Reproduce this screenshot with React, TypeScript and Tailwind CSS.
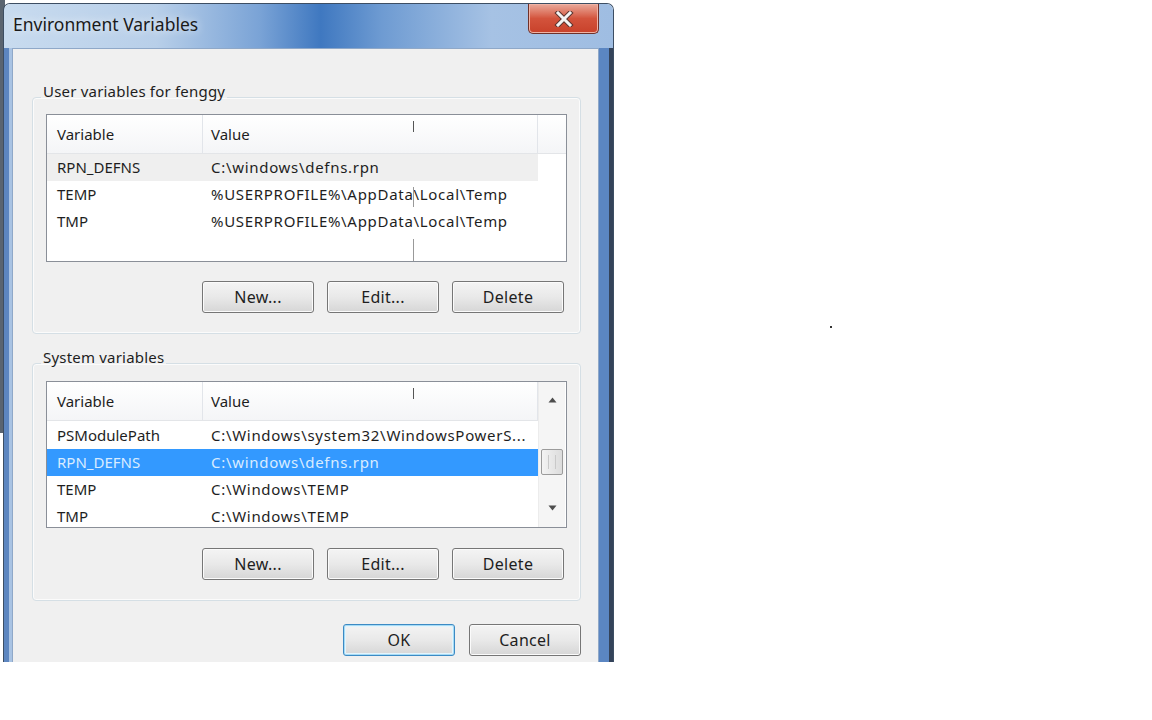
import { ReactNode } from "react";

// Win7-style "Environment Variables" dialog.
const FONT = "font-['Noto_Sans','Open_Sans',sans-serif]";

type Row = { name: string; value: string; selected?: boolean; hover?: boolean };

const USER_ROWS: Row[] = [
  { name: "RPN_DEFNS", value: "C:\\windows\\defns.rpn", hover: true },
  { name: "TEMP", value: "%USERPROFILE%\\AppData\\Local\\Temp" },
  { name: "TMP", value: "%USERPROFILE%\\AppData\\Local\\Temp" },
];

const SYSTEM_ROWS: Row[] = [
  { name: "PSModulePath", value: "C:\\Windows\\system32\\WindowsPowerS..." },
  { name: "RPN_DEFNS", value: "C:\\windows\\defns.rpn", selected: true },
  { name: "TEMP", value: "C:\\Windows\\TEMP" },
  { name: "TMP", value: "C:\\Windows\\TEMP" },
];

function Button({ children, primary }: { children: ReactNode; primary?: boolean }) {
  return (
    <button
      type="button"
      className={`flex h-[32px] w-[112px] items-center justify-center rounded-[3px] border bg-gradient-to-b from-[#f4f4f4] via-[#e9e9e9] to-[#d6d6d6] text-[16px] tracking-[0.3px] text-[#1e1e1e] ${
        primary
          ? "border-[#3c8ac4] shadow-[inset_0_0_0_1px_#a6dbf5,inset_0_0_0_2px_#e4f4fc]"
          : "border-[#767676] shadow-[inset_0_0_0_1px_#fbfbfb]"
      }`}
    >
      {children}
    </button>
  );
}

function HeaderCell({ children, w, pad }: { children: ReactNode; w: string; pad: string }) {
  return (
    <div className={`flex h-full shrink-0 items-center border-r border-[#e2e5ea] ${w}`}>
      <span className={pad}>{children}</span>
    </div>
  );
}

function ListRow({ row }: { row: Row }) {
  const bg = row.selected ? "bg-[#3399ff] text-[#d9ecff]" : row.hover ? "bg-[#efefef]" : "";
  return (
    <div className={`flex h-[27px] items-center ${bg}`}>
      <span className="w-[156px] shrink-0 pl-[10px]">{row.name}</span>
      <span className="truncate pl-[8px] tracking-[0.7px]">{row.value}</span>
    </div>
  );
}

function Scrollbar() {
  return (
    <div className="flex w-[27px] shrink-0 flex-col items-center border-l border-[#ececec] bg-[#f5f5f5]">
      <div className="flex h-[34px] w-full items-center justify-center pt-[2px]">
        <svg width="9" height="6" viewBox="0 0 9 6">
          <path d="M0.5 5.5 L4.5 0.5 L8.5 5.5 Z" fill="#4d4d4d" />
        </svg>
      </div>
      <div className="mt-[33px] flex h-[26px] w-[22px] items-center justify-center rounded-[2px] border border-[#9b9b9b] bg-gradient-to-r from-[#f3f3f3] to-[#dcdcdc]">
        <div className="h-[14px] w-[8px] border-x border-[#c9c9c9]" />
      </div>
      <div className="flex-1" />
      <div className="flex h-[30px] w-full items-center justify-center pb-[8px]">
        <svg width="9" height="6" viewBox="0 0 9 6">
          <path d="M0.5 0.5 L4.5 5.5 L8.5 0.5 Z" fill="#4d4d4d" />
        </svg>
      </div>
    </div>
  );
}

function ListView({
  rows,
  height,
  rowsPad,
  scroll,
  ticks,
}: {
  rows: Row[];
  height: string;
  rowsPad: string;
  scroll?: boolean;
  ticks?: boolean;
}) {
  return (
    <div className={`relative flex overflow-hidden border border-[#8a8f98] bg-white ${height}`}>
      <div className="flex w-[491px] shrink-0 flex-col">
        <div className="flex h-[39px] shrink-0 border-b border-[#e3e5e8] bg-gradient-to-b from-white to-[#f4f5f7]">
          <HeaderCell w="w-[156px]" pad="pl-[10px]">Variable</HeaderCell>
          <HeaderCell w="w-[335px]" pad="pl-[8px]">Value</HeaderCell>
        </div>
        <div className={rowsPad}>
          {rows.map((r) => (
            <ListRow key={r.name + r.value} row={r} />
          ))}
        </div>
      </div>
      {scroll ? (
        <Scrollbar />
      ) : (
        <div className="flex flex-1 flex-col">
          <div className="h-[39px] border-b border-[#e3e5e8] bg-gradient-to-b from-white to-[#f4f5f7]" />
        </div>
      )}
      {/* stray caret marks left in the capture */}
      <div className="absolute left-[366px] top-[6px] h-[11px] w-px bg-[#555]" />
      {ticks && (
        <>
          <div className="absolute left-[366px] top-[72px] h-[20px] w-px bg-[#999]" />
          <div className="absolute left-[366px] top-[124px] h-[22px] w-px bg-[#999]" />
        </>
      )}
    </div>
  );
}

function Group({ label, children }: { label: string; children: ReactNode }) {
  return (
    <fieldset className="rounded-[4px] border border-[#d5dfe5] px-[13px] pb-[20px] shadow-[inset_0_0_0_1px_#fbfbfb]">
      <legend className="-ml-[5px] px-[2px] pb-[12px] text-[15px] leading-[20px] tracking-[0.2px]">{label}</legend>
      {children}
    </fieldset>
  );
}

function CloseButton() {
  return (
    <div className="mr-[14px] flex h-[30px] w-[71px] items-center justify-center rounded-b-[5px] border border-t-0 border-[#6f3129] bg-gradient-to-b from-[#e9a99b] via-[#d3533c] to-[#c8412a] shadow-[inset_0_0_0_1px_#f0b3a5]">
      <svg width="20" height="16" viewBox="0 0 20 16">
        <path d="M4 2 L16 14 M16 2 L4 14" stroke="#5a3530" strokeWidth="5" strokeLinecap="square" />
        <path d="M4 2 L16 14 M16 2 L4 14" stroke="#f4f4f4" strokeWidth="3" strokeLinecap="square" />
      </svg>
    </div>
  );
}

export default function App() {
  return (
    <div className={`relative h-[720px] w-[1152px] overflow-hidden bg-white ${FONT}`}>
      {/* dark window edge peeking out behind the dialog */}
      <div className="absolute left-0 top-0 h-[433px] w-[5px] bg-[#5a6470]" />
      <div className="absolute left-[830px] top-[326px] h-[2px] w-[2px] bg-[#333]" />

      <div className="relative ml-[3px] mt-[3px] flex h-[659px] w-[611px] flex-col overflow-hidden rounded-t-[7px] border-x border-t border-[#3d4e63]">
        {/* title bar */}
        <div className="flex h-[44px] shrink-0 items-start justify-between bg-[linear-gradient(90deg,#c8dbef_0%,#b8cfe9_25%,#7aa3d6_42%,#3f78c0_52%,#6e9bd2_62%,#a6c2e4_80%,#9fbde2_100%)]">
          <span className="pl-[9px] pt-[8px] text-[17.5px] leading-[24px] text-[#1a1a1a] [text-shadow:0_0_8px_rgba(255,255,255,0.9)]">
            Environment Variables
          </span>
          <CloseButton />
        </div>

        <div className="flex flex-1">
          {/* left frame */}
          <div className="w-[8px] shrink-0 bg-[linear-gradient(90deg,#5d86c0_0%,#5d86c0_60%,#a9c3e3_60%)]" />
          {/* client area */}
          <div className="flex w-[587px] shrink-0 flex-col border border-b-0 border-[#8fa8c8] bg-[#f0f0f0] pl-[19px] pr-[17px] pt-[32px] text-[15px] text-[#1e1e1e]">
            <Group label="User variables for fenggy">
              <div className="mt-[1px]">
                <ListView rows={USER_ROWS} height="h-[148px]" rowsPad="pt-0" ticks />
              </div>
              <div className="mt-[19px] flex justify-end gap-[13px] pr-[3px]">
                <Button>New...</Button>
                <Button>Edit...</Button>
                <Button>Delete</Button>
              </div>
            </Group>

            <div className="mt-[13px]">
              <Group label="System variables">
                <div className="mt-[2px]">
                  <ListView rows={SYSTEM_ROWS} height="h-[147px]" rowsPad="pt-[1px]" scroll />
                </div>
                <div className="mt-[20px] flex justify-end gap-[13px] pr-[3px]">
                  <Button>New...</Button>
                  <Button>Edit...</Button>
                  <Button>Delete</Button>
                </div>
              </Group>
            </div>

            <div className="mt-[23px] flex justify-end gap-[14px]">
              <Button primary>OK</Button>
              <Button>Cancel</Button>
            </div>
          </div>
          {/* right frame */}
          <div className="flex-1 bg-[linear-gradient(90deg,#5b86c2_0%,#5b86c2_70%,#34435a_70%)]" />
        </div>
      </div>
    </div>
  );
}
